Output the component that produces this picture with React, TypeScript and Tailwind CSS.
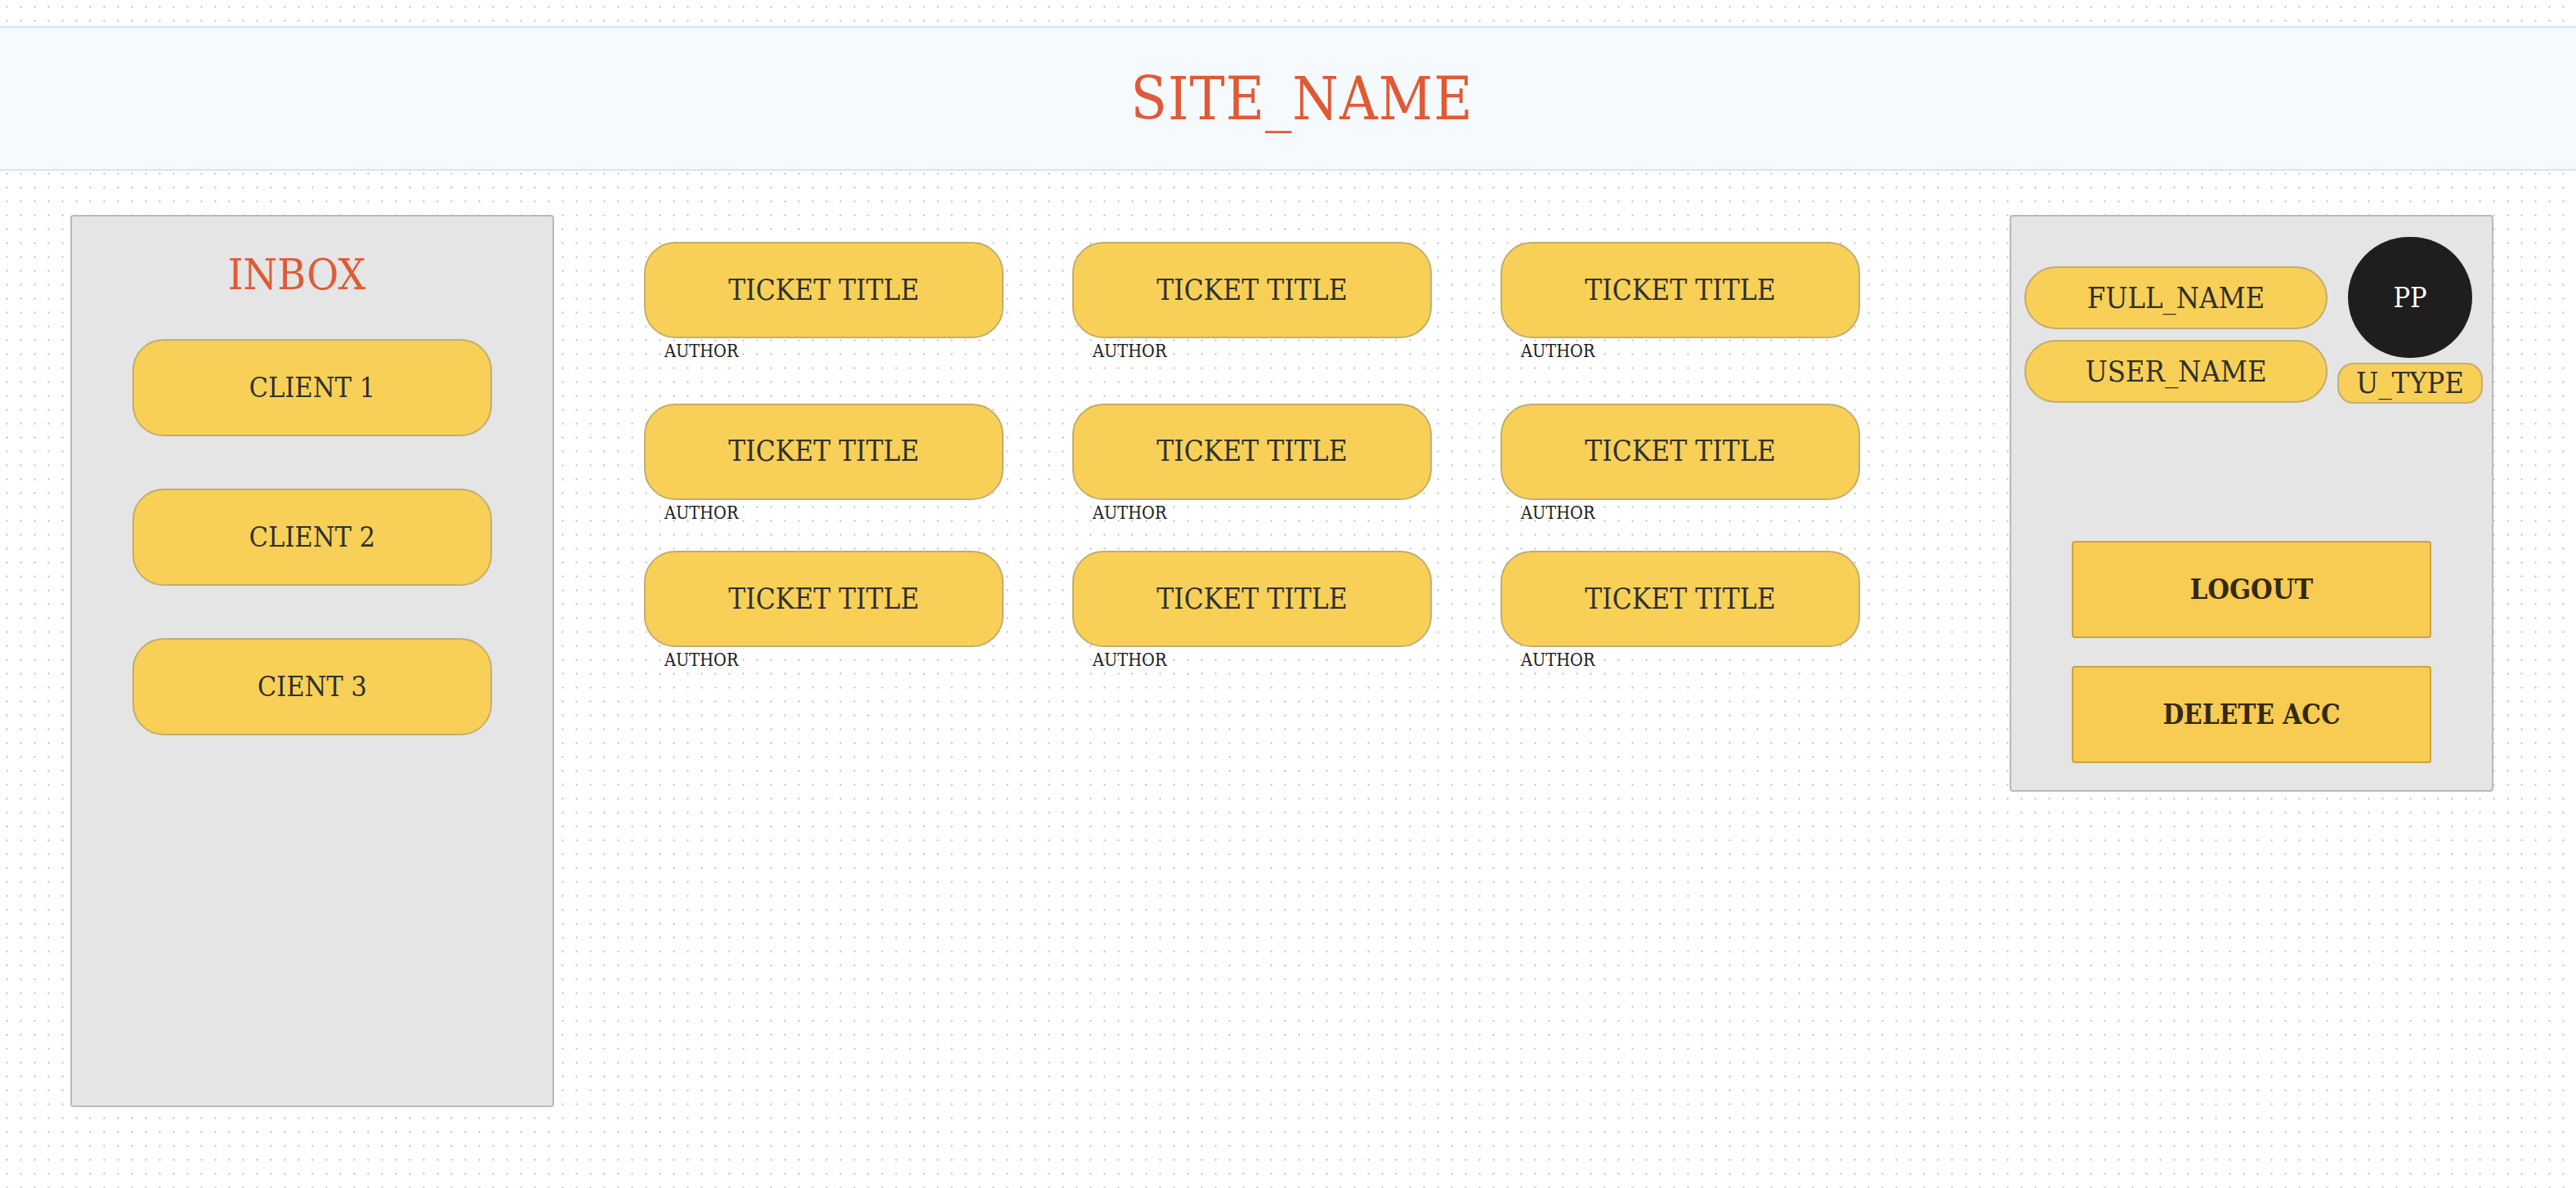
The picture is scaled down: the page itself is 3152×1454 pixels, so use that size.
const serif = "font-['DejaVu_Serif','Liberation_Serif',serif] [font-stretch:condensed]";

const clients = ["CLIENT 1", "CLIENT 2", "CIENT 3"];

function Ticket() {
  return (
    <div className="flex w-[440px] flex-col">
      <button className="flex h-[118px] items-center justify-center rounded-[38px] border-2 border-[#c2ad6e] bg-[#f8d058] text-[35px] text-[#303030]">
        TICKET TITLE
      </button>
      <span className="mt-[5px] pl-[25px] text-[21.5px] leading-none text-[#1c1c1c]">AUTHOR</span>
    </div>
  );
}

function TicketRow({ className }: { className: string }) {
  return (
    <div className={`flex gap-[84px] ${className}`}>
      <Ticket />
      <Ticket />
      <Ticket />
    </div>
  );
}

export default function App() {
  return (
    <div
      className={`min-h-screen w-full bg-white bg-[radial-gradient(circle,#d2d2d2_1px,transparent_1.5px)] bg-[length:17px_17px] pt-[32px] ${serif}`}
    >
      <header className="flex h-[177px] items-center justify-center border-y-2 border-[#d3e5f6] bg-[#f5fafe]">
        <h1 className="ml-[34px] text-[72px] leading-none tracking-[1px] text-[#e05a36]">SITE_NAME</h1>
      </header>

      <main className="mt-[54px] flex pl-[86px] pr-[101px]">
        <section className="flex h-[1092px] w-[592px] flex-col items-center rounded border-2 border-[#b9b9b9] bg-[#e5e5e5]">
          <h2 className="mr-[38px] mt-[44px] text-[53px] leading-none text-[#e05a36]">INBOX</h2>
          <div className="mt-[53px] flex flex-col gap-[64px]">
            {clients.map((c) => (
              <button
                key={c}
                className="flex h-[119px] w-[440px] items-center justify-center rounded-[38px] border-2 border-[#c2ad6e] bg-[#f8d058] text-[34px] text-[#303030]"
              >
                {c}
              </button>
            ))}
          </div>
        </section>

        <section className="ml-[110px] mt-[33px] flex flex-col">
          <TicketRow className="" />
          <TicketRow className="mt-[53px]" />
          <TicketRow className="mt-[36px]" />
        </section>

        <aside className="ml-auto flex h-[706px] w-[592px] flex-col rounded border-2 border-[#b9b9b9] bg-[#e5e5e5]">
          <div className="mt-[25px] flex pl-[16px]">
            <div className="mt-[36px] flex flex-col gap-[13px]">
              <div className="flex h-[77px] w-[371px] items-center justify-center rounded-full border-2 border-[#c2ad6e] bg-[#f8d058] text-[36px] text-[#303030]">
                FULL_NAME
              </div>
              <div className="flex h-[77px] w-[371px] items-center justify-center rounded-full border-2 border-[#c2ad6e] bg-[#f8d058] text-[36px] text-[#303030]">
                USER_NAME
              </div>
            </div>
            <div className="ml-[12px] flex flex-col items-center">
              <div className="flex h-[148px] w-[152px] items-center justify-center rounded-full bg-[#1e1e1e] text-[34px] text-white">
                PP
              </div>
              <div className="mt-[6px] flex h-[50px] w-[178px] items-center justify-center rounded-[20px] border-2 border-[#c2ad6e] bg-[#f8d058] text-[36px] leading-none text-[#303030]">
                U_TYPE
              </div>
            </div>
          </div>

          <div className="mt-[168px] flex flex-col items-center gap-[34px]">
            <button className="flex h-[119px] w-[440px] items-center justify-center rounded-[4px] border-2 border-[#c9a447] bg-[#f8cb52] text-[34px] font-bold text-[#33290f]">
              LOGOUT
            </button>
            <button className="flex h-[119px] w-[440px] items-center justify-center rounded-[4px] border-2 border-[#c9a447] bg-[#f8cb52] text-[33px] font-bold text-[#33290f]">
              DELETE ACC
            </button>
          </div>
        </aside>
      </main>
    </div>
  );
}
